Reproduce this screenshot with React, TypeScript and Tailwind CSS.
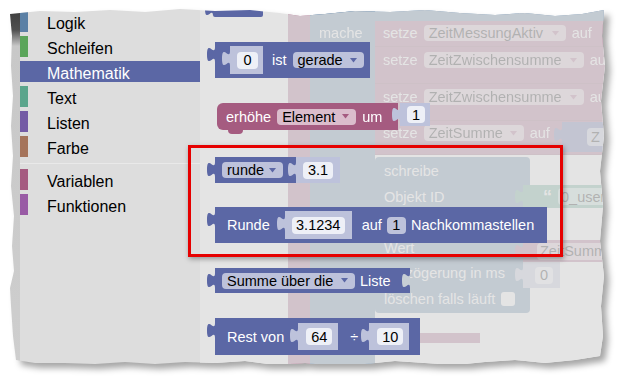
const TAB = "M8,0 c0,10 -8,-8 -8,7.5 s8,-2.5 8,7.5 Z";

const TOP_CATS = [
  { label: "Logik", color: "bg-[#5b80a5]" },
  { label: "Schleifen", color: "bg-[#5ba55b]" },
  { label: "Mathematik", color: "bg-[#5b67a5]", selected: true },
  { label: "Text", color: "bg-[#5ba58c]" },
  { label: "Listen", color: "bg-[#745ba5]" },
  { label: "Farbe", color: "bg-[#a5745b]" },
];

const BOTTOM_CATS = [
  { label: "Variablen", color: "bg-[#a55b80]" },
  { label: "Funktionen", color: "bg-[#995ba5]" },
];

function Tab({ fill, className }: { fill: string; className: string }) {
  return (
    <svg width="8" height="16" viewBox="0 0 8 16" className={`absolute ${className}`}>
      <path d={TAB} fill={fill} />
    </svg>
  );
}

function Arrow({ fill }: { fill: string }) {
  return (
    <svg width="7" height="5" viewBox="0 0 7 5">
      <path d="M0,0 H7 L3.5,4.5 Z" fill={fill} />
    </svg>
  );
}

function Drop({ label, w, bg, arrow, className = "" }: { label: string; w: string; bg: string; arrow: string; className?: string }) {
  return (
    <div className={`flex h-[16px] shrink-0 items-center justify-between rounded-[4px] pl-[5px] pr-[7px] text-black ${w} ${bg} ${className}`}>
      <span className="whitespace-nowrap">{label}</span>
      <Arrow fill={arrow} />
    </div>
  );
}

// number field in a shadow block
function Num({ value, w, className = "" }: { value: string; w: string; className?: string }) {
  return (
    <div className={`flex h-[17px] shrink-0 items-center justify-center rounded-[4px] bg-[#eef0f7] text-black ${w} ${className}`}>
      {value}
    </div>
  );
}

function Shadow({ w, h, className = "", children }: { w: string; h: string; className?: string; children: React.ReactNode }) {
  return (
    <div className={`relative flex shrink-0 items-center bg-[#bdc2db] ${w} ${h} ${className}`}>
      <Tab fill="#bdc2db" className="-left-[8px] top-[5px]" />
      {children}
    </div>
  );
}

function Cat({ label, color, selected }: { label: string; color: string; selected?: boolean }) {
  return (
    <div className={`flex h-[21px] shrink-0 items-center ${selected ? "bg-[#5b67a5] text-white" : "text-black"}`}>
      <div className={`h-full w-[8px] ${color}`} />
      <span className="pl-[19px] pt-[4px] leading-none">{label}</span>
    </div>
  );
}

function Toolbox() {
  return (
    <div className="flex h-full w-[180px] shrink-0 flex-col gap-[4px] bg-[#dddddd] pt-[5px] text-[16px]">
      {TOP_CATS.map((c) => (
        <Cat key={c.label} {...c} />
      ))}
      <div className="mt-[2px] mb-[1px] h-px shrink-0 bg-[#e9e9e9]" />
      {BOTTOM_CATS.map((c) => (
        <Cat key={c.label} {...c} />
      ))}
    </div>
  );
}

function SetzeRow({ h, pt, field, fieldW, tail }: { h: string; pt: string; field: string; fieldW: string; tail: string }) {
  return (
    <div className={`flex shrink-0 items-start border-b border-[#93506f] bg-[#a55b80] pl-[8px] text-white ${h} ${pt}`}>
      <span>setze</span>
      <Drop label={field} w={fieldW} bg="bg-[#dbbdcc]" arrow="#a55b80" className="ml-[6px] mt-[1px]" />
      <span className="ml-[6px] whitespace-nowrap">{tail}</span>
    </div>
  );
}

// blocks lying on the workspace, dimmed by the flyout
function Background() {
  return (
    <>
      <div className="absolute left-[88px] top-0 h-full w-[22px] bg-[#a55b80]" />
      <div className="absolute left-[88px] top-[327px] h-[10px] w-[192px] bg-[#a55b80]" />
      <div className="absolute left-[110px] top-0 h-full w-[65px] bg-[#5b80a5]" />
      <div className="absolute left-[110px] top-0 h-[15px] w-[310px] bg-[#5b80a5]" />
      <span className="absolute left-[119px] top-[18px] text-white">mache</span>

      <div className="absolute left-[175px] top-[15px] flex w-[240px] flex-col">
        <SetzeRow h="h-[26px]" pt="pt-[3px]" field="ZeitMessungAktiv" fieldW="w-[142px]" tail="auf" />
        <SetzeRow h="h-[37px]" pt="pt-[4px]" field="ZeitZwischensumme" fieldW="w-[160px]" tail="auf" />
        <SetzeRow h="h-[37px]" pt="pt-[4px]" field="ZeitZwischensumme" fieldW="w-[160px]" tail="auf" />
        <SetzeRow h="h-[34px]" pt="pt-[3px]" field="ZeitSumme" fieldW="w-[100px]" tail="auf" />
      </div>
      <div className="absolute left-[362px] top-[116px] flex h-[30px] w-[60px] items-center bg-[#5b67a5]">
        <Tab fill="#5b67a5" className="-left-[8px] top-[5px]" />
        <div className="ml-[25px] flex h-[18px] w-[40px] items-center rounded-[4px] bg-[#bdc2db] pl-[4px] text-black">Z</div>
      </div>

      <div className="absolute left-[175px] top-[151px] flex h-[156px] w-[155px] flex-col rounded-[4px] bg-[#5b80a5] pl-[9px] text-white">
        <div className="flex h-[28px] shrink-0 items-center">schreibe</div>
        <div className="flex h-[24px] shrink-0 items-center">Objekt ID</div>
        <div className="h-[26px] shrink-0" />
        <div className="flex h-[26px] shrink-0 items-center">Wert</div>
        <div className="flex h-[24px] shrink-0 items-center whitespace-nowrap">Verzögerung in ms</div>
        <div className="flex h-[28px] shrink-0 items-center whitespace-nowrap">
          löschen falls läuft
          <div className="ml-[6px] h-[14px] w-[14px] rounded-[3px] bg-white" />
        </div>
      </div>

      <div className="absolute left-[323px] top-[179px] flex h-[23px] w-[92px] items-center bg-[#5ba58c] text-white">
        <Tab fill="#5ba58c" className="-left-[8px] top-[4px]" />
        <span className="ml-[20px] text-[18px] font-bold leading-none">“</span>
        <div className="ml-[6px] flex h-[17px] flex-1 items-center rounded-[4px] bg-[#bde1d5] pl-[3px] text-black">0_userdata</div>
      </div>
      <div className="absolute left-[323px] top-[234px] flex h-[22px] w-[92px] items-center bg-[#a55b80]">
        <Tab fill="#a55b80" className="-left-[8px] top-[4px]" />
        <div className="ml-[14px] flex h-[17px] flex-1 items-center rounded-[4px] bg-[#dbbdcc] pl-[3px] text-black">ZeitSumme</div>
      </div>
      <div className="absolute left-[323px] top-[256px] flex h-[26px] w-[37px] items-center bg-[#bdc2db]">
        <Tab fill="#bdc2db" className="-left-[8px] top-[5px]" />
        <Num value="0" w="w-[18px]" className="ml-[12px]" />
      </div>
    </>
  );
}

function Flyout() {
  return (
    <>
      {/* cut off block at the top */}
      <div className="absolute left-[13px] top-[-10px] h-[21px] w-[50px] rounded-b-[2px] bg-[#5b67a5]">
        <Tab fill="#5b67a5" className="-left-[8px] top-[5px]" />
      </div>

      {/* [0] ist gerade */}
      <div className="absolute left-[15px] top-[36px] flex h-[36px] w-[155px] items-center bg-[#5b67a5] pl-[15px] text-white">
        <Tab fill="#5b67a5" className="-left-[8px] top-[5px]" />
        <Shadow w="w-[33px]" h="h-[28px]">
          <Num value="0" w="w-[21px]" className="ml-[7px]" />
        </Shadow>
        <span className="ml-[9px]">ist</span>
        <Drop label="gerade" w="w-[71px]" bg="bg-[#bdc2db]" arrow="#5b67a5" className="ml-[6px]" />
      </div>

      {/* erhöhe Element um 1 */}
      <div className="absolute left-[17px] top-[97px] flex h-[27px] w-[181px] items-center rounded-l-[6px] bg-[#a55b80] pl-[9px] text-white">
        <span>erhöhe</span>
        <Drop label="Element" w="w-[79px]" bg="bg-[#dbbdcc]" arrow="#a55b80" className="ml-[6px]" />
        <span className="ml-[6px]">um</span>
        <div className="absolute left-[11px] top-[27px] h-[4px] w-[15px] rounded-b-[4px] bg-[#a55b80]" />
      </div>
      <div className="absolute left-[200px] top-[97px] flex h-[23px] w-[30px] items-center bg-[#bdc2db]">
        <Tab fill="#bdc2db" className="-left-[8px] top-[4px]" />
        <Num value="1" w="w-[18px]" className="ml-[7px]" />
      </div>

      {/* runde 3.1 */}
      <div className="absolute left-[15px] top-[151px] flex h-[26px] text-black">
        <div className="relative flex h-full w-[81px] items-center bg-[#5b67a5] pl-[7px]">
          <Tab fill="#5b67a5" className="-left-[8px] top-[5px]" />
          <Drop label="runde" w="w-[61px]" bg="bg-[#bdc2db]" arrow="#5b67a5" />
        </div>
        <Shadow w="w-[44px]" h="h-full">
          <Num value="3.1" w="w-[30px]" className="ml-[7px]" />
        </Shadow>
      </div>

      {/* Runde 3.1234 auf 1 Nachkommastellen */}
      <div className="absolute left-[15px] top-[201px] flex h-[36px] w-[332px] items-center bg-[#5b67a5] pl-[12px] text-white">
        <Tab fill="#5b67a5" className="-left-[8px] top-[5px]" />
        <span>Runde</span>
        <Shadow w="w-[67px]" h="h-[28px]" className="ml-[15px]">
          <Num value="3.1234" w="w-[53px]" className="ml-[7px]" />
        </Shadow>
        <span className="ml-[10px]">auf</span>
        <div className="ml-[5px] flex h-[17px] w-[19px] items-center justify-center rounded-[4px] bg-[#bdc2db] text-black">1</div>
        <span className="ml-[5px]">Nachkommastellen</span>
      </div>

      {/* Summe über die Liste */}
      <div className="absolute left-[15px] top-[262px] flex h-[25px] w-[195px] items-center bg-[#5b67a5] pl-[7px] text-white">
        <Tab fill="#5b67a5" className="-left-[8px] top-[5px]" />
        <Drop label="Summe über die" w="w-[133px]" bg="bg-[#bdc2db]" arrow="#5b67a5" />
        <span className="ml-[5px]">Liste</span>
        <Tab fill="#c7ced5" className="right-0 top-[5px]" />
      </div>

      {/* Rest von 64 ÷ 10 */}
      <div className="absolute left-[15px] top-[312px] flex h-[37px] w-[205px] items-center bg-[#5b67a5] pl-[12px] text-white">
        <Tab fill="#5b67a5" className="-left-[8px] top-[5px]" />
        <span className="whitespace-nowrap">Rest von</span>
        <Shadow w="w-[40px]" h="h-[27px]" className="ml-[14px]">
          <Num value="64" w="w-[26px]" className="ml-[8px]" />
        </Shadow>
        <span className="ml-[12px]">÷</span>
        <Shadow w="w-[40px]" h="h-[27px]" className="ml-[11px]">
          <Num value="10" w="w-[26px]" className="ml-[8px]" />
        </Shadow>
      </div>
    </>
  );
}

function Workspace() {
  return (
    <div className="relative h-full flex-1 overflow-hidden bg-white text-[14.5px] leading-[18px]">
      <Background />
      <div className="absolute inset-0 bg-[rgba(221,221,221,0.8)]" />
      <Flyout />
    </div>
  );
}

export default function App() {
  return (
    <div className="h-[384px] w-[623px] overflow-hidden bg-white pl-[10px] pt-[6px] [font-family:'Liberation_Sans',Arial,sans-serif]">
      <div className="h-[358px] w-[600px] [filter:drop-shadow(5px_5px_3px_rgba(0,0,0,0.35))]">
        <div className="relative flex h-full w-full [clip-path:polygon(0px_8px,30px_5px,65px_6px,100px_4px,135px_6px,170px_3px,205px_5px,240px_4px,270px_7px,290px_10px,315px_8px,345px_5px,380px_6px,415px_4px,450px_7px,485px_9px,515px_7px,545px_10px,572px_8px,594px_4px,592px_30px,595px_60px,591px_95px,594px_130px,590px_165px,593px_200px,590px_235px,594px_270px,591px_300px,593px_330px,590px_350px,565px_354px,535px_357px,505px_354px,475px_356px,445px_359px,415px_357px,385px_355px,355px_358px,325px_360px,295px_357px,265px_359px,235px_355px,205px_357px,175px_356px,145px_358px,115px_356px,85px_358px,55px_357px,25px_357px,6px_354px,3px_330px,1px_300px,0px_282px,4px_265px,2px_240px,4px_210px,1px_180px,3px_150px,1px_120px,3px_90px,1px_60px,2px_30px)]">
          <div className="h-full w-[10px] shrink-0 bg-[linear-gradient(to_bottom,#3a3a3a_0px,#505050_24px,#c8c8c8_40px,#cecece_100%)]" />
          <Toolbox />
          <Workspace />
          {/* red annotation frame */}
          <div className="absolute left-[178px] top-[139px] h-[112px] w-[375px] border-[3px] border-[#e60000] shadow-[1px_2px_5px_rgba(0,0,0,0.35)]" />
        </div>
      </div>
    </div>
  );
}
